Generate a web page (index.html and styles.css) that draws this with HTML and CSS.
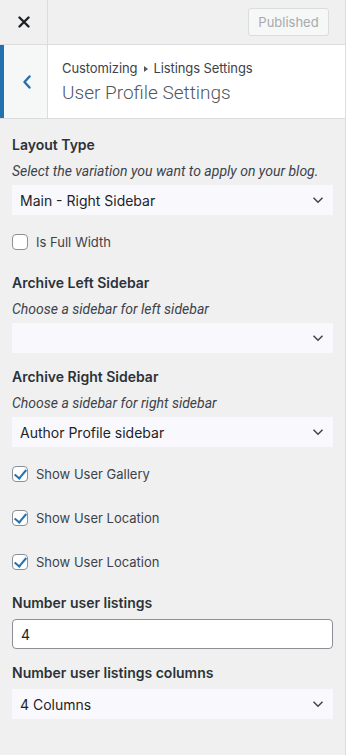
FILE: index.html
```html
<!DOCTYPE html>
<html lang="en">
<head>
    <meta charset="UTF-8">
    <meta name="viewport" content="width=device-width, initial-scale=1.0">
    <title>User Profile Settings</title>
    <link rel="stylesheet" href="styles.css">
</head>
<body>
    <div class="panel">
        <div class="top-bar">
            <button type="button" class="close-btn" aria-label="Close">
                <svg width="12" height="12" viewBox="0 0 12 12"><path d="M1.5 1.5l9 9M10.5 1.5l-9 9" stroke="#1d2327" stroke-width="2.4" stroke-linecap="round"/></svg>
            </button>
            <div class="top-actions">
                <button type="button" class="publish-btn" disabled>Published</button>
            </div>
        </div>

        <div class="section-head">
            <button type="button" class="back-btn" aria-label="Back">
                <svg width="10" height="14" viewBox="0 0 10 14"><path d="M7.5 1.5L2.5 7l5 5.5" fill="none" stroke="#2271b1" stroke-width="2.4" stroke-linecap="round" stroke-linejoin="round"/></svg>
            </button>
            <div class="section-title">
                <span class="crumb">Customizing <span class="crumb-arrow"></span> Listings Settings</span>
                <h3>User Profile Settings</h3>
            </div>
        </div>

        <div class="controls">
            <div class="control">
                <label class="control-title" for="layout">Layout Type</label>
                <span class="description">Select the variation you want to apply on your blog.</span>
                <div class="select-wrap">
                    <select id="layout">
                        <option>Main - Right Sidebar</option>
                    </select>
                    <svg class="chevron" width="12" height="8" viewBox="0 0 12 8"><path d="M1.5 1.8l4.5 4.4 4.5-4.4" fill="none" stroke="#3c434a" stroke-width="1.5"/></svg>
                </div>
            </div>

            <div class="control check-row">
                <label><input type="checkbox"> Is Full Width</label>
            </div>

            <div class="control">
                <label class="control-title" for="left-sidebar">Archive Left Sidebar</label>
                <span class="description">Choose a sidebar for left sidebar</span>
                <div class="select-wrap">
                    <select id="left-sidebar">
                        <option></option>
                    </select>
                    <svg class="chevron" width="12" height="8" viewBox="0 0 12 8"><path d="M1.5 1.8l4.5 4.4 4.5-4.4" fill="none" stroke="#3c434a" stroke-width="1.5"/></svg>
                </div>
            </div>

            <div class="control">
                <label class="control-title" for="right-sidebar">Archive Right Sidebar</label>
                <span class="description">Choose a sidebar for right sidebar</span>
                <div class="select-wrap">
                    <select id="right-sidebar">
                        <option>Author Profile sidebar</option>
                    </select>
                    <svg class="chevron" width="12" height="8" viewBox="0 0 12 8"><path d="M1.5 1.8l4.5 4.4 4.5-4.4" fill="none" stroke="#3c434a" stroke-width="1.5"/></svg>
                </div>
            </div>

            <div class="control check-row check-first">
                <label><input type="checkbox" checked> Show User Gallery</label>
            </div>
            <div class="control check-row">
                <label><input type="checkbox" checked> Show User Location</label>
            </div>
            <div class="control check-row">
                <label><input type="checkbox" checked> Show User Location</label>
            </div>

            <div class="control">
                <label class="control-title" for="listings">Number user listings</label>
                <input type="text" id="listings" class="text-input" value="4">
            </div>

            <div class="control">
                <label class="control-title" for="columns">Number user listings columns</label>
                <div class="select-wrap">
                    <select id="columns">
                        <option>4 Columns</option>
                    </select>
                    <svg class="chevron" width="12" height="8" viewBox="0 0 12 8"><path d="M1.5 1.8l4.5 4.4 4.5-4.4" fill="none" stroke="#3c434a" stroke-width="1.5"/></svg>
                </div>
            </div>
        </div>
    </div>
</body>
</html>
```

FILE: styles.css
```css
* {
    box-sizing: border-box;
}

body {
    font-family: Inter, "Liberation Sans", Arial, sans-serif;
    margin: 0;
    padding: 0;
    background-color: #f0f0f1;
    color: #3c434a;
    overflow: hidden;
}

.panel {
    width: 346px;
    min-height: 100vh;
    background-color: #f0f0f1;
    border-right: 1px solid #dcdcde;
}

/* top bar */
.top-bar {
    display: flex;
    height: 45px;
    border-bottom: 1px solid #dcdcde;
}

.close-btn {
    width: 48px;
    height: 44px;
    display: flex;
    align-items: center;
    justify-content: center;
    background: transparent;
    border: none;
    border-right: 1px solid #dcdcde;
    padding: 0;
}

.top-actions {
    flex: 1;
    display: flex;
    justify-content: flex-end;
    align-items: center;
    padding-right: 16px;
}

.publish-btn {
    font-family: inherit;
    font-size: 13px;
    color: #a7aaad;
    background-color: #f6f7f7;
    border: 1px solid #dcdcde;
    border-radius: 3px;
    width: 81px;
    height: 28px;
    padding: 0;
}

/* section header */
.section-head {
    display: flex;
    height: 74px;
    background-color: #fff;
    border-bottom: 1px solid #dcdcde;
}

.back-btn {
    width: 48px;
    display: flex;
    align-items: center;
    justify-content: center;
    padding: 0 0 0 2px;
    background-color: #f6f7f7;
    border: none;
    border-left: 4px solid #2271b1;
    border-right: 1px solid #dcdcde;
}

.section-title {
    display: flex;
    flex-direction: column;
    justify-content: center;
    padding-left: 14px;
    padding-top: 2px;
}

.crumb {
    font-size: 13px;
    line-height: 18px;
    color: #3c434a;
    letter-spacing: -0.1px;
}

.crumb-arrow {
    display: inline-block;
    width: 0;
    height: 0;
    margin: 0 2px 1px 3px;
    border-top: 3px solid transparent;
    border-bottom: 3px solid transparent;
    border-left: 4px solid #50575e;
}

.section-title h3 {
    margin: 3px 0 0;
    font-family: Roboto, "Liberation Sans", sans-serif;
    font-size: 19px;
    line-height: 26px;
    font-weight: 300;
    color: #50575e;
}

/* controls */
.controls {
    padding: 12px 12px 0;
}

.control {
    margin-bottom: 10px;
}

.control-title {
    display: block;
    font-size: 14px;
    line-height: 28px;
    font-weight: 600;
    color: #2c3338;
    margin-bottom: 2px;
}

.description {
    display: block;
    font-family: Roboto, "Liberation Sans", sans-serif;
    font-size: 14px;
    line-height: 20px;
    font-style: italic;
    color: #3c434a;
    margin-bottom: 4px;
}

.select-wrap {
    position: relative;
}

.select-wrap select {
    display: block;
    width: 100%;
    height: 30px;
    appearance: none;
    -webkit-appearance: none;
    font-family: inherit;
    font-size: 14px;
    color: #1d2327;
    background-color: #f9f9fd;
    border: none;
    border-radius: 0;
    padding: 0 24px 0 8px;
}

.chevron {
    position: absolute;
    right: 9px;
    top: 11px;
    pointer-events: none;
}

.check-row {
    height: 34px;
    display: flex;
    align-items: center;
}

.check-first {
    margin-top: 1px;
}

.check-row label {
    display: flex;
    align-items: center;
    font-size: 13px;
    color: #3c434a;
}

.check-row input {
    appearance: none;
    -webkit-appearance: none;
    width: 16px;
    height: 16px;
    margin: 0 8px 0 0;
    border: 1px solid #8c8f94;
    border-radius: 4px;
    background-color: #fff;
    position: relative;
}

.check-row input:checked::before {
    content: "";
    position: absolute;
    left: 4px;
    top: 0;
    width: 5px;
    height: 10px;
    border-right: 2.5px solid #2271b1;
    border-bottom: 2.5px solid #2271b1;
    transform: rotate(40deg);
}

.text-input {
    display: block;
    width: 100%;
    height: 30px;
    font-family: inherit;
    font-size: 14px;
    color: #1d2327;
    background-color: #fff;
    border: 1px solid #8c8f94;
    border-radius: 4px;
    padding: 0 8px;
}
```
